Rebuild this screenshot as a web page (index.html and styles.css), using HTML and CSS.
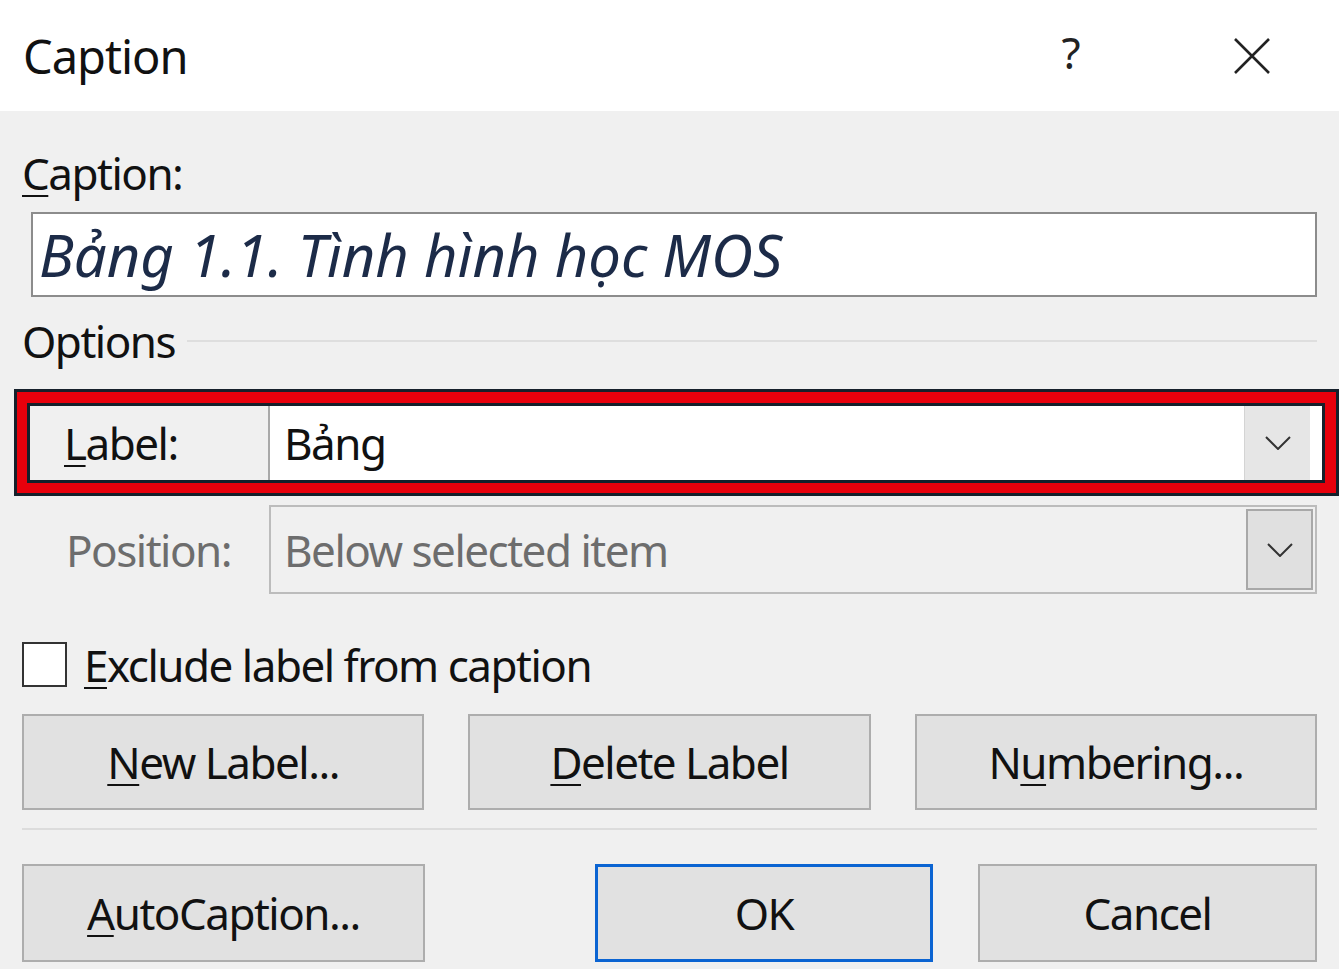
FILE: index.html
```html
<!DOCTYPE html>
<html lang="vi">
<head>
    <meta charset="UTF-8">
    <meta name="viewport" content="width=device-width, initial-scale=1.0">
    <title>Caption</title>

    <link rel="stylesheet" href="styles.css">

</head>
<body>

    <div id="dialog">

        <header class="titlebar">
            <span class="title">Caption</span>
            <div class="title_buttons">
                <span class="help">?</span>
                <svg class="close" width="38" height="38" viewBox="0 0 38 38">
                    <path d="M2 2 L36 36 M36 2 L2 36" stroke="#222" stroke-width="2.6" fill="none"/>
                </svg>
            </div>
        </header>

        <div class="content">

            <div class="field_label"><u>C</u>aption:</div>
            <div class="caption_input">Bảng 1.1. Tình hình học MOS</div>

            <div class="group_title">
                <span>Options</span>
                <span class="rule"></span>
            </div>

            <div class="highlight">
                <div class="option_row label_row">
                    <span class="row_label"><u>L</u>abel:</span>
                    <div class="combo">
                        <span class="combo_value">Bảng</span>
                        <span class="combo_btn">
                            <svg width="26" height="14" viewBox="0 0 26 14"><path d="M1 1 L13 13 L25 1" stroke="#333" stroke-width="2" fill="none"/></svg>
                        </span>
                    </div>
                </div>
            </div>

            <div class="option_row position_row">
                <span class="row_label">Position:</span>
                <div class="combo">
                    <span class="combo_value">Below selected item</span>
                    <span class="combo_btn">
                        <svg width="26" height="14" viewBox="0 0 26 14"><path d="M1 1 L13 13 L25 1" stroke="#333" stroke-width="2" fill="none"/></svg>
                    </span>
                </div>
            </div>

            <label class="check_row">
                <span class="check_box"></span>
                <span><u>E</u>xclude label from caption</span>
            </label>

            <div class="button_row">
                <button class="btn"><u>N</u>ew Label...</button>
                <button class="btn"><u>D</u>elete Label</button>
                <button class="btn">N<u>u</u>mbering...</button>
            </div>

            <div class="separator"></div>

            <div class="footer_row">
                <button class="btn"><u>A</u>utoCaption...</button>
                <button class="btn btn_default">OK</button>
                <button class="btn">Cancel</button>
            </div>

        </div>

    </div>

</body>
</html>
```

FILE: styles.css
```css
*{
    box-sizing: border-box;
    font-family: "Noto Sans", "Open Sans", sans-serif;
}

body{
    margin: 0;
    padding: 0;

    width: 1339px;
    height: 969px;
    overflow: hidden;

    background: #f0f0f0;
    color: #111;
    font-size: 44px;
    letter-spacing: -1.5px;
}

u{
    text-decoration-thickness: 2px;
    text-underline-offset: 5px;
}

.titlebar{
    height: 111px;
    padding-left: 23px;

    display: flex;
    align-items: center;
    justify-content: space-between;

    background: #fff;
}

.title{
    font-size: 47px;
    letter-spacing: -1px;
}

.title_buttons{
    display: flex;
    align-items: center;
    gap: 154px;
    padding-right: 68px;
}

.help{
    margin-top: -8px;
    font-size: 44px;
    color: #222;
}

.content{
    padding: 0 22px;
}

.field_label{
    margin-top: 34px;
    height: 55px;

    display: flex;
    align-items: center;
}

.caption_input{
    margin: 12px 0 0 9px;
    height: 85px;

    display: flex;
    align-items: center;
    padding-left: 6px;

    background: #fff;
    border: 2px solid #8c8c8c;

    font-size: 58px;
    font-style: italic;
    color: #1c2b48;
    letter-spacing: 0;
}

.group_title{
    margin-top: 22px;
    height: 44px;

    display: flex;
    align-items: center;
    gap: 12px;

    .rule{
        flex: 1;
        height: 2px;
        background: #dedede;
    }
}

.highlight{
    margin: 26px -22px 0 -8px;
    padding: 11px 11px 10px 10px;

    background: #e8000c;
    border: 3px solid #16202b;
}

.option_row{
    display: grid;
    align-items: center;
}

.label_row{
    grid-template-columns: 238px 1fr;
    height: 80px;

    background: #f0f0f0;
    border: 3px solid #16202b;

    .row_label{
        padding-left: 34px;
    }

    .combo{
        height: 100%;
        padding-right: 12px;

        background: #fff;
        border-left: 2px solid #a9a9a9;
    }

    .combo_value{
        padding-left: 14px;
    }

    .combo_btn{
        height: 100%;
        background: #e6e6e6;
        border-left: 1px solid #d4d4d4;
    }
}

.combo{
    display: flex;
    align-items: center;
}

.combo_value{
    flex: 1;
}

.combo_btn{
    width: 66px;

    display: flex;
    align-items: center;
    justify-content: center;
}

.position_row{
    grid-template-columns: 247px 1fr;
    margin-top: 9px;
    height: 89px;
    color: #6d6d6d;

    .row_label{
        padding-left: 44px;
    }

    .combo{
        height: 100%;
        padding: 2px;

        background: #f0f0f0;
        border: 2px solid #bcbcbc;
    }

    .combo_value{
        padding-left: 11px;
    }

    .combo_btn{
        height: 100%;
        width: 67px;

        background: #e0e0e0;
        border: 2px solid #a8a8a8;
    }
}

.check_row{
    margin-top: 48px;
    height: 45px;

    display: flex;
    align-items: center;
    gap: 17px;
}

.check_box{
    width: 45px;
    height: 45px;

    background: #fff;
    border: 2px solid #333;
}

.btn{
    height: 100%;

    background: #e1e1e1;
    border: 2px solid #adadad;

    color: #111;
    font-size: 44px;
    letter-spacing: -1.5px;
}

.button_row{
    margin-top: 27px;
    height: 96px;

    display: grid;
    grid-template-columns: repeat(3, 1fr);
    gap: 44px;
}

.separator{
    margin-top: 18px;
    height: 2px;
    background: #dcdcdc;
}

.footer_row{
    margin-top: 34px;
    height: 98px;

    display: flex;

    .btn{
        width: 339px;
    }

    .btn:first-child{
        width: 403px;
        margin-right: auto;
    }

    .btn_default{
        width: 338px;
        margin-right: 45px;
        border: 3px solid #0b64d2;
    }
}
```
